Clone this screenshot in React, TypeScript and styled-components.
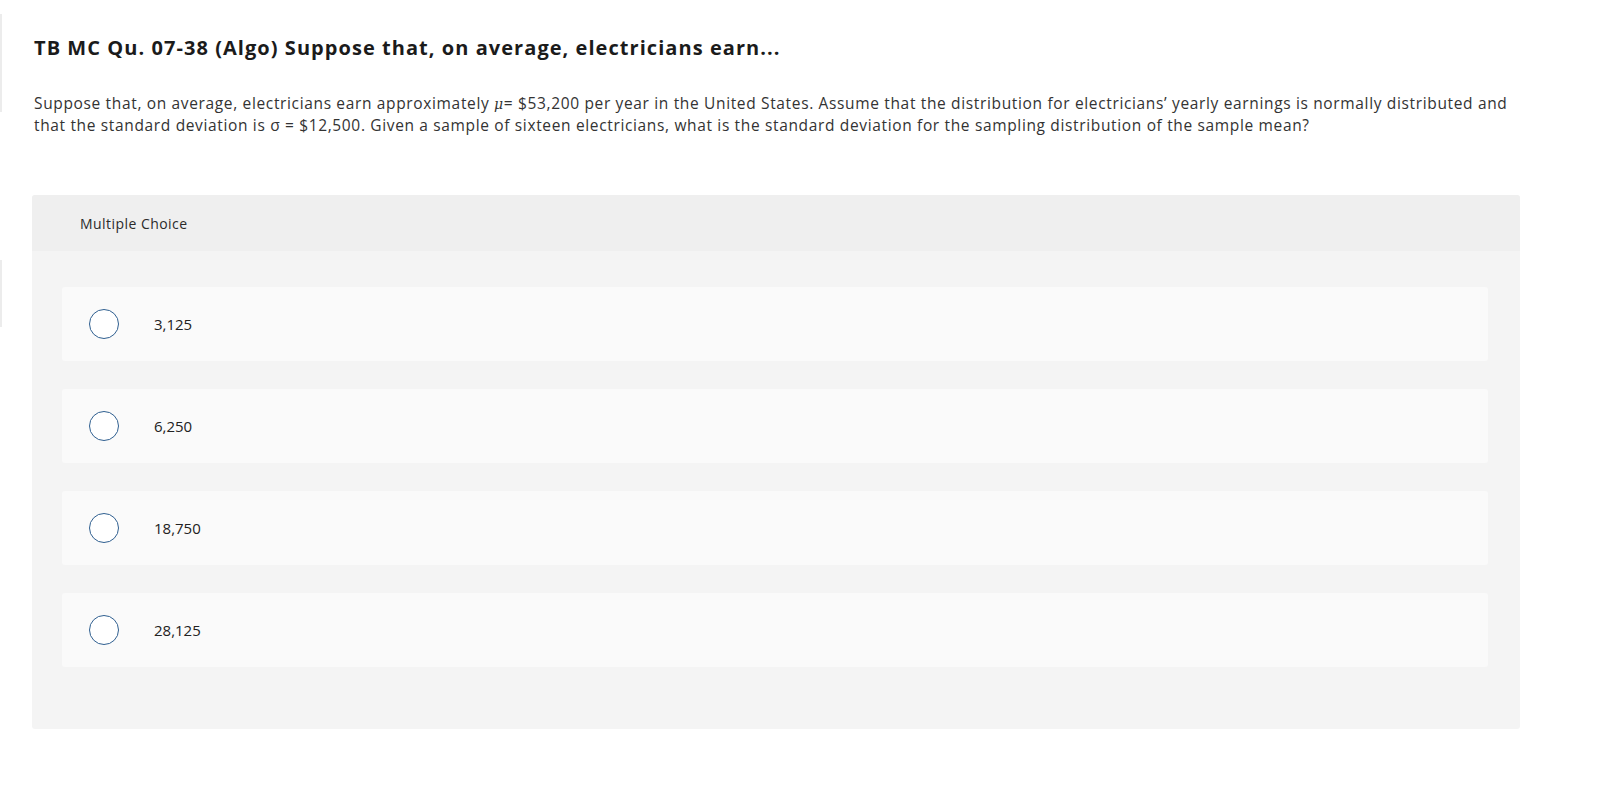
import React from 'react'
import styled, { createGlobalStyle } from 'styled-components'

const GlobalStyle = createGlobalStyle`
  html, body {
    margin: 0;
    padding: 0;
    background: #ffffff;
  }
  body {
    font-family: "Open Sans", "Liberation Sans", sans-serif;
    color: #333333;
  }
`;

const Page = styled.div`
  position: relative;
  padding: 30px 87px 40px 32px;
`;

const EdgeMark = styled.div<{ $top: number; $height: number }>`
  position: absolute;
  left: 0;
  top: ${({ $top }) => $top}px;
  width: 2px;
  height: ${({ $height }) => $height}px;
  background: #ececec;
`;

const Title = styled.h1`
  margin: 0 0 0 2px;
  font-size: 20px;
  line-height: 36px;
  font-weight: 700;
  letter-spacing: 1.05px;
  color: #1b1b1b;
`;

const Prompt = styled.p`
  margin: 27px 0 0 2px;
  font-size: 15.5px;
  line-height: 20.5px;
  letter-spacing: 0.65px;
  color: #333333;
`;

const Mu = styled.i`
  font-family: "DejaVu Serif", serif;
  font-size: 14px;
`;

const ChoiceBox = styled.div`
  margin-top: 60px;
  background: #f4f4f4;
  border-radius: 3px;
  overflow: hidden;
`;

const ChoiceHeader = styled.div`
  height: 56px;
  display: flex;
  align-items: center;
  padding-left: 48px;
  background: #efefef;
  font-size: 14px;
  letter-spacing: 0.45px;
  color: #2b2b2b;
`;

const OptionList = styled.div`
  display: flex;
  flex-direction: column;
  gap: 28px;
  padding: 36px 32px 62px 30px;
`;

const Option = styled.label`
  height: 74px;
  display: flex;
  align-items: center;
  padding-left: 27px;
  background: #fafafa;
  border-radius: 3px;
  cursor: pointer;
`;

const Radio = styled.span`
  width: 28px;
  height: 28px;
  border: 1.5px solid #2f5f90;
  border-radius: 50%;
  background: #ffffff;
  flex-shrink: 0;
`;

const OptionText = styled.span`
  margin-left: 35px;
  font-size: 15px;
  color: #222222;
`;

const choices = ['3,125', '6,250', '18,750', '28,125'];

const App: React.FC = () => {
  return (
    <>
      <GlobalStyle />
      <Page>
        <EdgeMark $top={14} $height={98} />
        <EdgeMark $top={260} $height={67} />
        <Title>TB MC Qu. 07-38 (Algo) Suppose that, on average, electricians earn...</Title>
        <Prompt>
          Suppose that, on average, electricians earn approximately <Mu>μ</Mu>= $53,200 per year in the United States.
          Assume that the distribution for electricians’ yearly earnings is normally distributed and that the standard
          deviation is σ = $12,500. Given a sample of sixteen electricians, what is the standard deviation for the
          sampling distribution of the sample mean?
        </Prompt>
        <ChoiceBox>
          <ChoiceHeader>Multiple Choice</ChoiceHeader>
          <OptionList>
            {choices.map((c) => (
              <Option key={c}>
                <Radio />
                <OptionText>{c}</OptionText>
              </Option>
            ))}
          </OptionList>
        </ChoiceBox>
      </Page>
    </>
  );
};

export default App;
